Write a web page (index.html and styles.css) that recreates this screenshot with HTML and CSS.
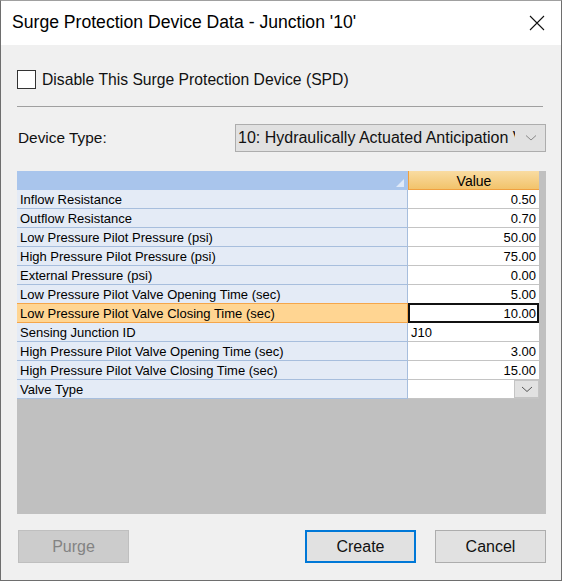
FILE: index.html
```html
<!DOCTYPE html>
<html lang="en">
<head>
    <meta charset="UTF-8">
    <title>Surge Protection Device Data</title>
    <link rel="stylesheet" href="styles.css">
</head>
<body>

<div class="window">
    <div class="titlebar">
        <span class="title">Surge Protection Device Data - Junction '10'</span>
        <svg class="close" width="16" height="16" viewBox="0 0 16 16">
            <path d="M1 1 L15 15 M15 1 L1 15" stroke="#111" stroke-width="1.1" fill="none"/>
        </svg>
    </div>

    <div class="content">
        <label class="check-row">
            <span class="checkbox"></span>
            <span>Disable This Surge Protection Device (SPD)</span>
        </label>

        <div class="separator"></div>

        <div class="type-row">
            <span class="type-label">Device Type:</span>
            <div class="select">
                <span class="select-text">10: Hydraulically Actuated Anticipation Valve</span>
                <svg class="chevron" width="12" height="8" viewBox="0 0 12 8">
                    <path d="M1 1.5 L6 6 L11 1.5" stroke="#888" stroke-width="1" fill="none"/>
                </svg>
            </div>
        </div>

        <div class="grid">
            <div class="grid-rows">
                <div class="head-name"><span class="sort-mark"></span></div>
                <div class="head-value">Value</div>

                <div class="name">Inflow Resistance</div>
                <div class="value">0.50</div>

                <div class="name">Outflow Resistance</div>
                <div class="value">0.70</div>

                <div class="name">Low Pressure Pilot Pressure (psi)</div>
                <div class="value">50.00</div>

                <div class="name">High Pressure Pilot Pressure (psi)</div>
                <div class="value">75.00</div>

                <div class="name">External Pressure (psi)</div>
                <div class="value">0.00</div>

                <div class="name">Low Pressure Pilot Valve Opening Time (sec)</div>
                <div class="value">5.00</div>

                <div class="name selected">Low Pressure Pilot Valve Closing Time (sec)</div>
                <div class="value editing">10.00</div>

                <div class="name">Sensing Junction ID</div>
                <div class="value text">J10</div>

                <div class="name">High Pressure Pilot Valve Opening Time (sec)</div>
                <div class="value">3.00</div>

                <div class="name">High Pressure Pilot Valve Closing Time (sec)</div>
                <div class="value">15.00</div>

                <div class="name">Valve Type</div>
                <div class="value combo">
                    <span class="combo-btn">
                        <svg width="12" height="7" viewBox="0 0 12 7">
                            <path d="M1 1 L6 5.5 L11 1" stroke="#555" stroke-width="1" fill="none"/>
                        </svg>
                    </span>
                </div>
            </div>
        </div>

        <div class="buttons">
            <button class="btn disabled">Purge</button>
            <div class="spacer"></div>
            <button class="btn default">Create</button>
            <button class="btn">Cancel</button>
        </div>
    </div>
</div>

</body>
</html>
```

FILE: styles.css
```css
* {
    box-sizing: border-box;
    margin: 0;
    padding: 0;
}

body {
    width: 562px;
    height: 581px;
    font-family: 'Liberation Sans', Arial, sans-serif;
    color: #000;
    background: #f0f0f0;
}

.window {
    width: 562px;
    height: 581px;
    border: 1px solid #6e6e6e;
    border-top-color: #a0a0a0;
    background: #f0f0f0;
    display: flex;
    flex-direction: column;
}

.titlebar {
    height: 44px;
    background: #fff;
    display: flex;
    align-items: center;
    justify-content: space-between;
    padding: 0 16px 0 11px;
}

.title {
    font-size: 17.6px;
    color: #000;
    padding-bottom: 1px;
}

.close {
    margin-top: -1px;
}

.content {
    flex: 1;
    padding: 25px 15px 0 16px;
    display: flex;
    flex-direction: column;
}

.check-row {
    display: flex;
    align-items: center;
    gap: 6px;
    font-size: 15.7px;
    height: 19px;
    color: #111;
}

.checkbox {
    width: 19px;
    height: 19px;
    border: 1px solid #333;
    background: #fff;
}

.separator {
    height: 1px;
    background: #a0a0a0;
    margin: 17px 3px 0 0;
}

.type-row {
    display: flex;
    align-items: center;
    justify-content: space-between;
    margin-top: 17px;
}

.type-label {
    font-size: 15.4px;
    padding-left: 1px;
    color: #111;
}

.select {
    width: 311px;
    height: 28px;
    background: #e1e1e1;
    border: 1px solid #adadad;
    display: flex;
    align-items: center;
    padding: 0 8px 0 2px;
    gap: 10px;
}

.select-text {
    flex: 1;
    font-size: 16px;
    white-space: nowrap;
    overflow: hidden;
    color: #111;
}

.grid {
    margin-top: 19px;
    width: 529px;
    height: 343px;
    background: #c0c0c0;
}

.grid-rows {
    display: grid;
    grid-template-columns: 391px 131px;
    grid-auto-rows: 19px;
    font-size: 13px;
}

.grid-rows > div {
    display: flex;
    align-items: center;
    white-space: nowrap;
    overflow: hidden;
}

.head-name {
    background: #a9c5ec;
    border-bottom: 1px solid #a9c5ec;
    justify-content: flex-end;
    padding-right: 4px;
}

.sort-mark {
    width: 0;
    height: 0;
    border-left: 8px solid transparent;
    border-bottom: 8px solid #dfe9f8;
    margin-top: 5px;
}

.head-value {
    background: linear-gradient(#f9dca2, #f2c36b);
    border-left: 1px solid #f0a040;
    border-bottom: 1px solid #f0a040;
    justify-content: center;
    font-size: 14px;
    padding-top: 1px;
}

.name {
    background: #e4ebf6;
    border-bottom: 1px solid #a7bedd;
    border-right: 1px solid #a7bedd;
    padding-left: 3px;
    padding-top: 1px;
}

.name.selected {
    background: #ffd592;
    border-top: 1px solid #f5a64b;
    border-bottom: 1px solid #f5a64b;
    border-right: 1px solid #f5a64b;
    margin-top: -1px;
    height: 20px;
}

.value {
    background: #fff;
    border-bottom: 1px solid #c4c4c4;
    justify-content: flex-end;
    padding-right: 3px;
    padding-top: 1px;
}

.value.editing {
    border: 2px solid #111;
    margin-top: -1px;
    height: 20px;
    padding-right: 1px;
}

.value.text {
    justify-content: flex-start;
    padding-left: 3px;
}

.value.combo {
    padding-right: 0;
    padding-top: 0;
}

.combo-btn {
    width: 25px;
    height: 18px;
    background: #e1e1e1;
    border: 1px solid #c4c4c4;
    display: flex;
    align-items: center;
    justify-content: center;
}

.buttons {
    display: flex;
    margin-top: 16px;
    padding-left: 1px;
    gap: 19px;
}

.spacer {
    flex: 1;
}

.btn {
    width: 111px;
    height: 33px;
    font-family: 'Liberation Sans', Arial, sans-serif;
    font-size: 16px;
    color: #111;
    background: #e1e1e1;
    border: 1px solid #adadad;
}

.btn.default {
    border: 2px solid #0078d7;
}

.btn.disabled {
    background: #cccccc;
    border-color: #bfbfbf;
    color: #838383;
}
```
